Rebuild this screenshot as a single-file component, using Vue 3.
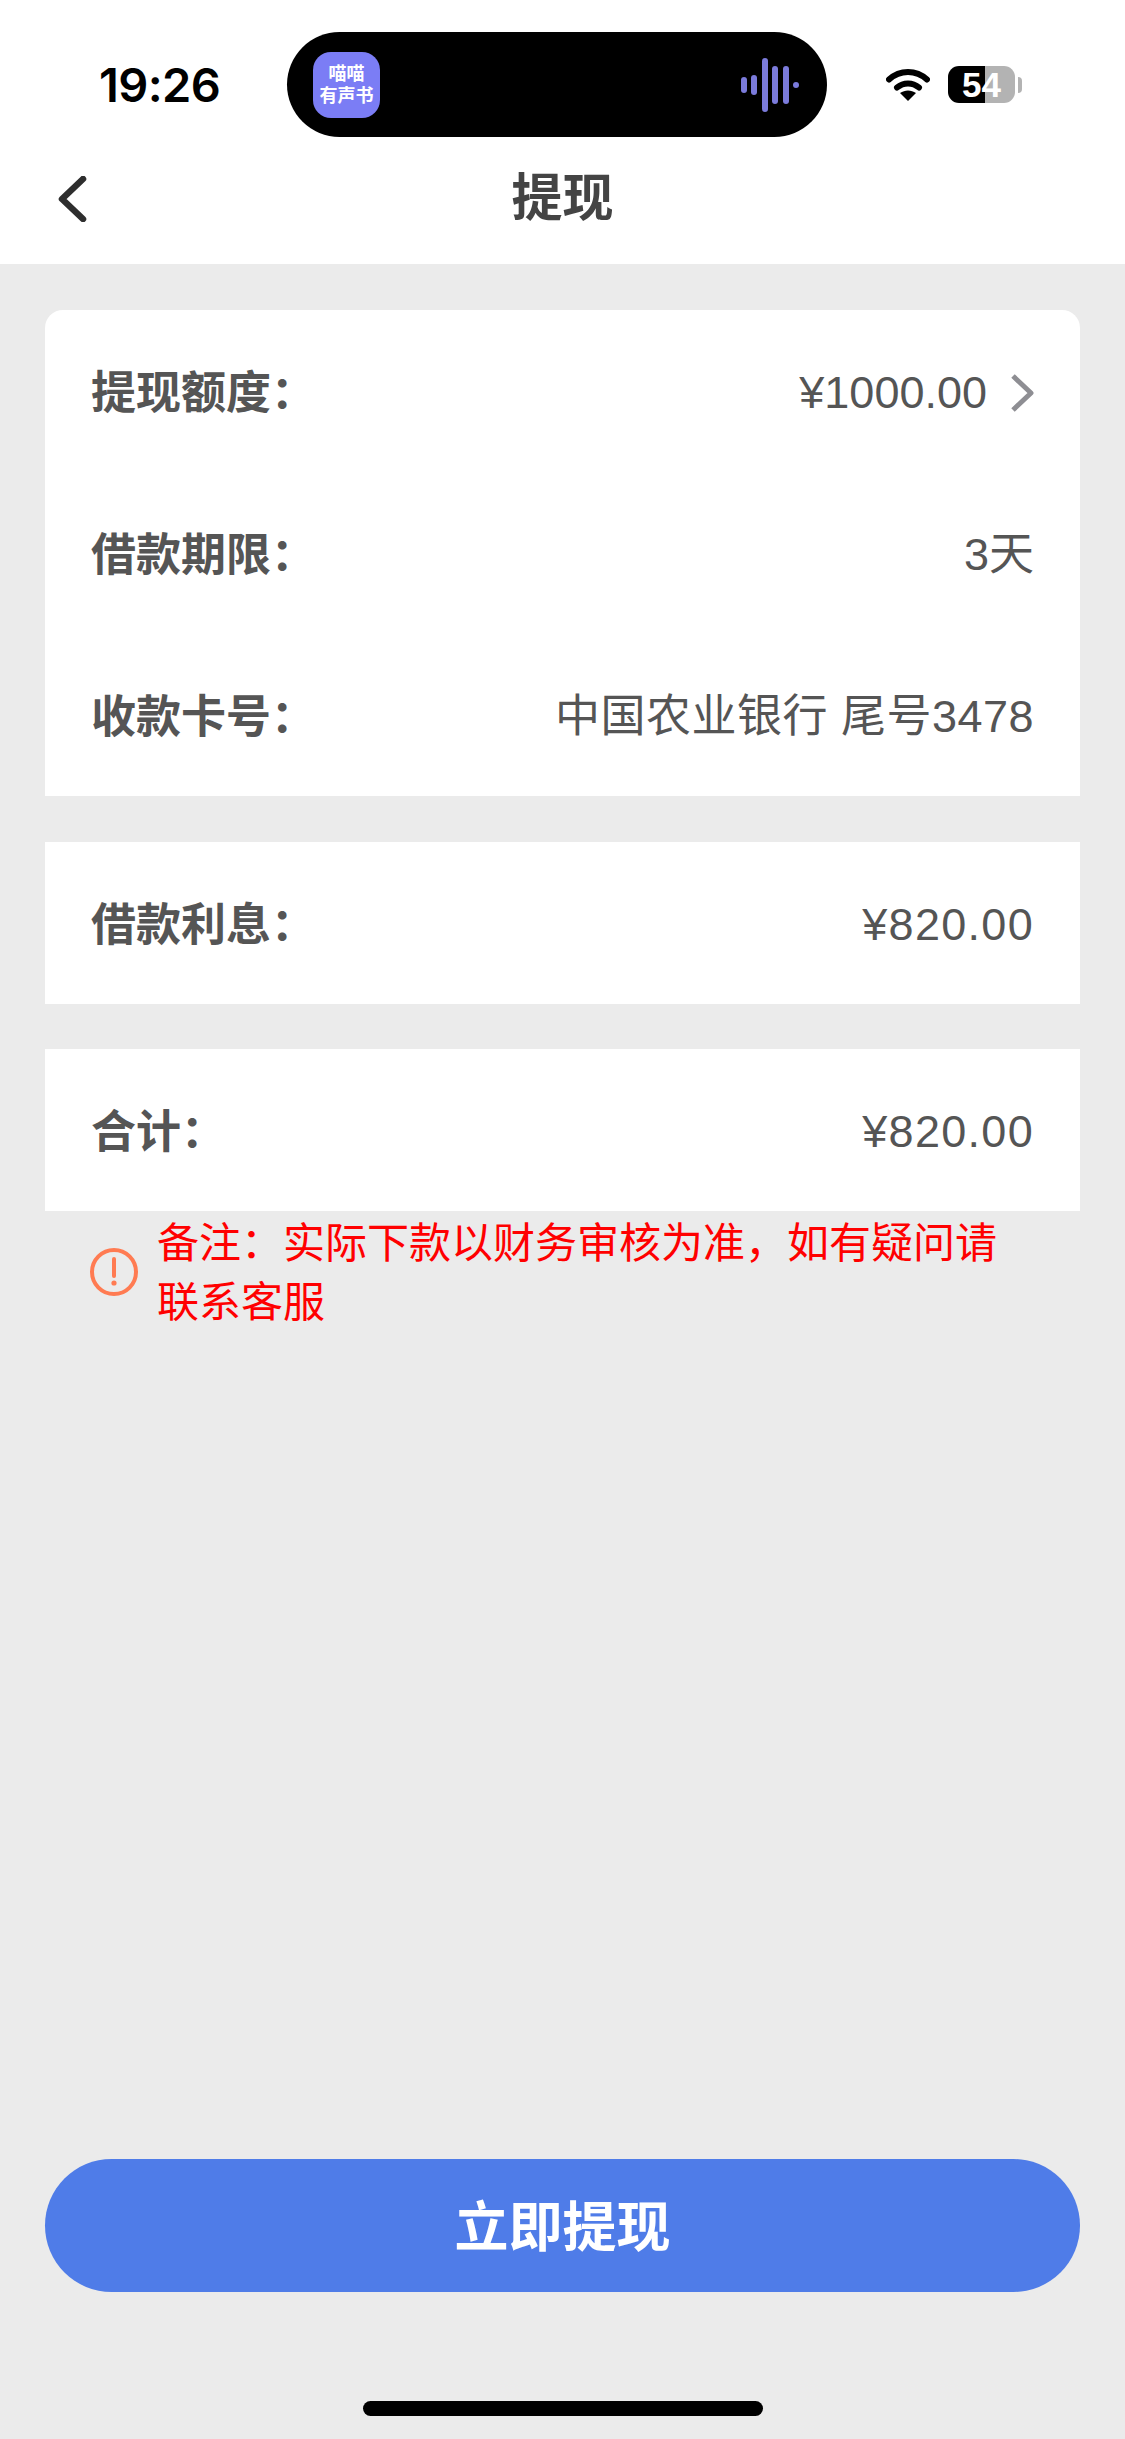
<script setup>
const bars = [16, 20, 54, 38, 38, 6]
const sections = [
  {
    rows: [
      { label: '提现额度：', value: '¥1000.00', arrow: true, spacing: 0 },
      { label: '借款期限：', value: '3天', spacing: 0 },
      { label: '收款卡号：', value: '中国农业银行 尾号3478', spacing: 0.5 }
    ],
    rounded: true
  },
  { rows: [{ label: '借款利息：', value: '¥820.00', spacing: 1.3 }] },
  { rows: [{ label: '合计：', value: '¥820.00', spacing: 1.3 }] }
]
</script>

<template>
  <div class="page" lang="zh-CN">
    <header class="header">
      <div class="status">
        <span class="time">19:26</span>
        <div class="island">
          <div class="app-icon"><span>喵喵</span><span>有声书</span></div>
          <div class="bars">
            <i v-for="(h, n) in bars" :key="n" :style="{ height: h + 'px' }"></i>
          </div>
        </div>
        <svg class="wifi" width="44" height="33" viewBox="0 0 44 33">
          <path d="M3 11.5C14 1.5 30 1.5 41 11.5" fill="none" stroke="#000" stroke-width="6" stroke-linecap="round" />
          <path d="M11 19.5C17.5 14 26.5 14 33 19.5" fill="none" stroke="#000" stroke-width="6" stroke-linecap="round" />
          <path d="M14 25C19 21.5 25 21.5 30 25L22 33Z" fill="#000" />
        </svg>
        <div class="battery"><span>54</span></div>
        <i class="nub"></i>
      </div>
      <nav class="nav">
        <svg class="back" width="30" height="46" viewBox="0 0 30 46">
          <path d="M26 3L5 23L26 43" fill="none" stroke="#2e2e2e" stroke-width="6.5" stroke-linecap="round" stroke-linejoin="round" />
        </svg>
        <h1 class="title">提现</h1>
      </nav>
    </header>

    <main class="main">
      <section v-for="(s, i) in sections" :key="i" class="card" :class="{ rounded: s.rounded }">
        <div v-for="r in s.rows" :key="r.label" class="row">
          <span class="label">{{ r.label }}</span>
          <span class="value">
            <span :style="{ letterSpacing: r.spacing + 'px' }">{{ r.value }}</span>
            <svg v-if="r.arrow" class="arrow" width="24" height="40" viewBox="0 0 24 40">
              <path d="M3 3L21 20L3 37" fill="none" stroke="#8e8e93" stroke-width="5" stroke-linejoin="round" />
            </svg>
          </span>
        </div>
      </section>

      <div class="note">
        <svg class="warn" width="48" height="48" viewBox="0 0 48 48">
          <circle cx="24" cy="24" r="22" fill="none" stroke="#ff7b52" stroke-width="4" />
          <path d="M24 11V28" stroke="#ff7b52" stroke-width="4" stroke-linecap="round" />
          <circle cx="24" cy="35" r="2.6" fill="#ff7b52" />
        </svg>
        <p>备注：实际下款以财务审核为准，如有疑问请联系客服</p>
      </div>

      <button class="submit"><span>立即提现</span></button>
      <div class="home"></div>
    </main>
  </div>
</template>

<style scoped>
.page {
  width: 1125px;
  height: 2439px;
  display: flex;
  flex-direction: column;
  background: #ebebeb;
  font-family: "Liberation Sans", "Noto Sans CJK SC", sans-serif;
  overflow: hidden;
}
.header {
  height: 264px;
  background: #fff;
  flex: none;
}
.status {
  display: flex;
  align-items: center;
  height: 105px;
  padding: 32px 0 0 99px;
}
.time {
  width: 118px;
  font: 600 47px/1 Inter, "Liberation Sans", sans-serif;
  letter-spacing: -0.6px;
  color: #000;
  white-space: nowrap;
}
.island {
  width: 540px;
  height: 105px;
  margin-left: 70px;
  padding: 0 28px 0 26px;
  box-sizing: border-box;
  display: flex;
  align-items: center;
  justify-content: space-between;
  background: #000;
  border-radius: 53px;
}
.app-icon {
  width: 67px;
  height: 66px;
  border-radius: 18px;
  background: #7b7df5;
  color: #fff;
  display: flex;
  flex-direction: column;
  align-items: center;
  justify-content: center;
  font-size: 18px;
  line-height: 22px;
  font-weight: 700;
}
.bars {
  display: flex;
  align-items: center;
  gap: 4.5px;
}
.bars i {
  display: block;
  width: 6px;
  border-radius: 3px;
  background: #7b7bdb;
}
.wifi {
  margin-left: 59px;
  flex: none;
}
.battery {
  width: 67px;
  height: 37px;
  margin-left: 18px;
  flex: none;
  border-radius: 11px;
  background: linear-gradient(90deg, #000 55%, #b3b3b3 55%);
  color: #fff;
  display: flex;
  align-items: center;
  justify-content: center;
  font: 700 35px/1 "Liberation Sans", sans-serif;
}
.nub {
  width: 4px;
  height: 16px;
  margin-left: 3px;
  border-radius: 0 8px 8px 0;
  background: #b3b3b3;
}
.nav {
  height: 124px;
  display: grid;
  grid-template-columns: 1fr auto 1fr;
  align-items: center;
  padding: 0 57px;
}
.back {
  display: block;
}
.title {
  margin: 0;
  font-size: 51px;
  line-height: 60px;
  font-weight: 600;
  color: #444;
}
.main {
  flex: 1;
  display: flex;
  flex-direction: column;
  padding: 46px 45px 0;
  min-height: 0;
}
.card {
  background: #fff;
  margin-bottom: 46px;
}
.card:nth-child(2) {
  margin-bottom: 45px;
}
.card:nth-child(3) {
  margin-bottom: 0;
}
.rounded {
  border-radius: 18px 18px 0 0;
}
.row {
  height: 162px;
  padding: 0 46px;
  display: flex;
  align-items: center;
  justify-content: space-between;
  font-size: 45px;
  line-height: 60px;
}
.label {
  padding-top: 5px;
  font-weight: 600;
  color: #555;
}
.value {
  display: flex;
  align-items: center;
  padding-top: 3px;
  color: #555;
  white-space: nowrap;
}
.arrow {
  margin-left: 23px;
}
.note {
  display: flex;
  align-items: center;
  gap: 19px;
  padding: 3px 60px 0 45px;
  color: #ff0000;
  font-size: 42px;
  line-height: 59px;
}
.warn {
  flex: none;
  margin-bottom: 2px;
}
.note p {
  margin: 0;
  flex: 1;
}
.submit {
  margin-top: auto;
  height: 133px;
  flex: none;
  border: none;
  padding: 0 0 4px;
  border-radius: 67px;
  background: #4f7ce8;
  color: #fff;
  font-family: inherit;
  font-size: 54px;
  font-weight: 700;
}
.home {
  width: 400px;
  height: 15px;
  flex: none;
  margin: 109px auto 23px;
  border-radius: 8px;
  background: #000;
}
</style>
